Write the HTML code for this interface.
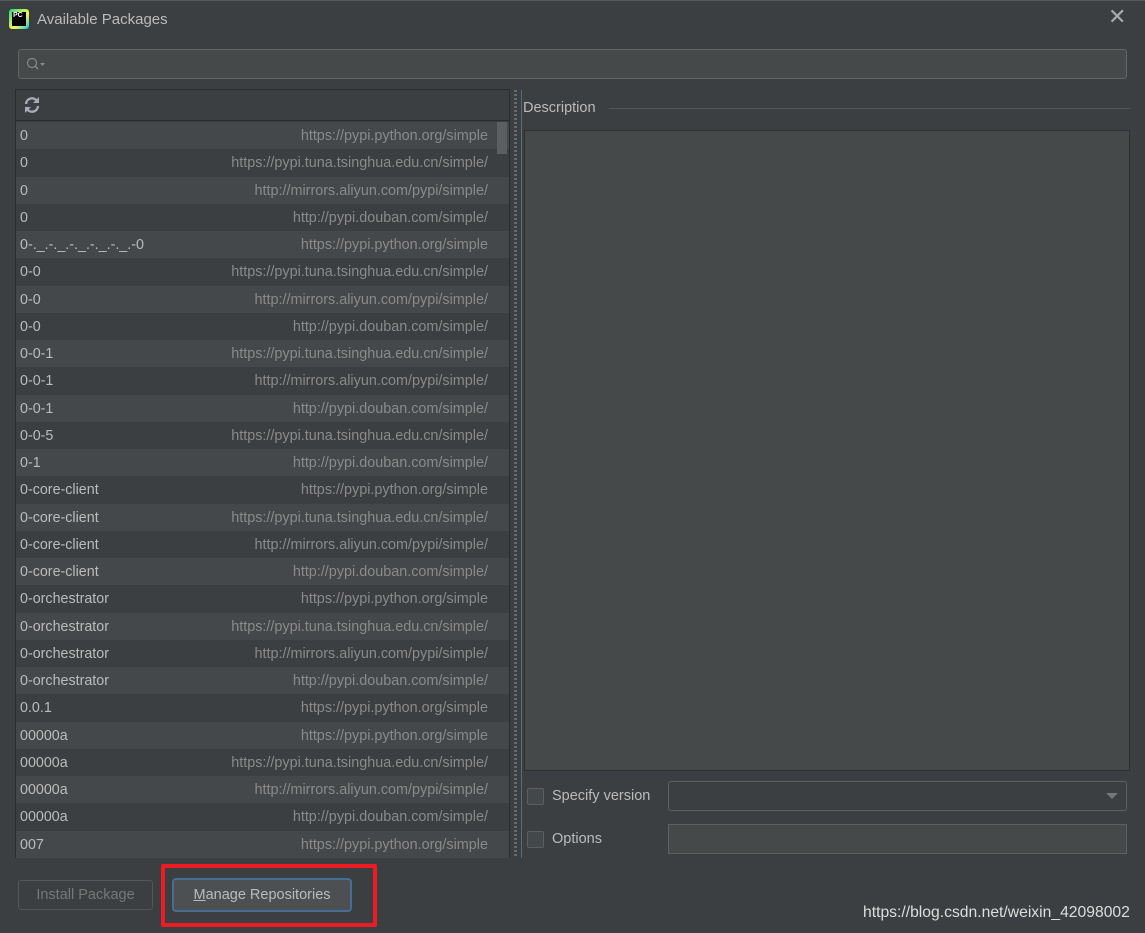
<!DOCTYPE html>
<html><head><style>
*{margin:0;padding:0;box-sizing:border-box}
body{width:1145px;height:933px;background:#3c3f41;font-family:"Liberation Sans",sans-serif;color:#bbbbbb;position:relative;overflow:hidden;font-size:14px}
.abs{position:absolute}
.row{position:absolute;left:16px;width:493px;height:27.25px;line-height:28px}
.row .n{position:absolute;left:4px;color:#bbb;font-size:14.3px}
.row .u{position:absolute;right:21px;color:#8a8a8a;font-size:14.4px}
</style></head><body>
<div class="abs" style="left:0;top:0;width:1145px;height:1px;background:#555"></div>
<div class="abs" style="left:9px;top:9px;width:20px;height:20px;background:linear-gradient(135deg,#21d789,#fcf84a 60%,#07c3f2);border-radius:3px"></div>
<div class="abs" style="left:12px;top:12px;width:14px;height:14px;background:#000;color:#fff;font-size:7px;font-weight:bold;line-height:8px;padding-left:1px">PC</div>
<div class="abs" style="left:37px;top:11px;font-size:15px;color:#bbb">Available Packages</div>
<div class="abs" style="left:1108px;top:4px;font-size:22px;color:#aaa;font-weight:300">✕</div>

<div class="abs" style="left:18px;top:49px;width:1109px;height:30px;border:1px solid #646464;border-radius:3px;background:#45494a"></div>
<svg class="abs" style="left:25px;top:56px" width="22" height="16"><circle cx="7" cy="7" r="4.5" fill="none" stroke="#8a8a8a" stroke-width="1.2"/><line x1="10" y1="10" x2="13" y2="13" stroke="#8a8a8a" stroke-width="1.3"/><path d="M15 7 L20 7 L17.5 10Z" fill="#8a8a8a"/></svg>

<div class="abs" style="left:15px;top:89px;width:495px;height:769px;border:1px solid #2b2b2b;background:#3c3f41"></div>
<div class="abs" style="left:16px;top:120px;width:493px;height:1px;background:#2b2b2b"></div>
<svg class="abs" style="left:23px;top:96px" width="18" height="18" viewBox="0 0 18 18"><path d="M3 8 A6 6 0 0 1 14 5" fill="none" stroke="#aab" stroke-width="2.4"/><path d="M15 10 A6 6 0 0 1 4 13" fill="none" stroke="#aab" stroke-width="2.4"/><path d="M16 1 L16 7 L10 7Z" fill="#aab"/><path d="M2 17 L2 11 L8 11Z" fill="#aab"/></svg>

<div id="list"></div>
<div class="abs" style="left:497px;top:122px;width:10px;height:32px;background:#5c5f61"></div>

<div class="abs" style="left:514px;top:90px;width:3px;height:768px;background-image:repeating-linear-gradient(#6a6a6a 0 2px,transparent 2px 4px)"></div>
<div class="abs" style="left:521px;top:90px;width:1px;height:768px;background:#5a6b7d"></div>

<div class="abs" style="left:523px;top:100px;font-size:14.5px;color:#bbb">Description</div>
<div class="abs" style="left:609px;top:108px;width:521px;height:1px;background:#555"></div>
<div class="abs" style="left:524px;top:130px;width:606px;height:641px;background:#45494a;border:1px solid #2f2f2f"></div>

<div class="abs" style="left:527px;top:788px;width:17px;height:17px;border:1px solid #5e5e5e;border-radius:2px;background:#43494a"></div>
<div class="abs" style="left:552px;top:788px;font-size:14.5px">Specify version</div>
<div class="abs" style="left:668px;top:781px;width:459px;height:30px;border:1px solid #5e6060;border-radius:3px;background:#3c3f41"></div>
<div class="abs" style="left:1106px;top:793px;width:0;height:0;border-left:6px solid transparent;border-right:6px solid transparent;border-top:6px solid #777"></div>
<div class="abs" style="left:527px;top:831px;width:17px;height:17px;border:1px solid #5e5e5e;border-radius:2px;background:#43494a"></div>
<div class="abs" style="left:552px;top:831px;font-size:14.5px">Options</div>
<div class="abs" style="left:668px;top:824px;width:459px;height:30px;border:1px solid #5e6060;background:#45494a"></div>

<div class="abs" style="left:18px;top:880px;width:135px;height:30px;border:1px solid #555;border-radius:3px;color:#777;text-align:center;line-height:28px;font-size:14.5px">Install Package</div>
<div class="abs" style="left:161px;top:864px;width:216px;height:63px;border:4px solid #ed1c24;border-radius:2px"></div>
<div class="abs" style="left:172px;top:878px;width:180px;height:34px;border:2px solid #466d94;border-radius:4px;background:#4c5052;color:#bbb;text-align:center;line-height:30px;font-size:14.5px"><u>M</u>anage Repositories</div>

<div class="abs" style="left:863px;top:904px;font-size:15.7px;color:#ddd">https://blog.csdn.net/weixin_42098002</div>

<script>
var d=[["0","https://pypi.python.org/simple"],["0","https://pypi.tuna.tsinghua.edu.cn/simple/"],["0","http://mirrors.aliyun.com/pypi/simple/"],["0","http://pypi.douban.com/simple/"],["0-._.-._.-._.-._.-._.-0","https://pypi.python.org/simple"],["0-0","https://pypi.tuna.tsinghua.edu.cn/simple/"],["0-0","http://mirrors.aliyun.com/pypi/simple/"],["0-0","http://pypi.douban.com/simple/"],["0-0-1","https://pypi.tuna.tsinghua.edu.cn/simple/"],["0-0-1","http://mirrors.aliyun.com/pypi/simple/"],["0-0-1","http://pypi.douban.com/simple/"],["0-0-5","https://pypi.tuna.tsinghua.edu.cn/simple/"],["0-1","http://pypi.douban.com/simple/"],["0-core-client","https://pypi.python.org/simple"],["0-core-client","https://pypi.tuna.tsinghua.edu.cn/simple/"],["0-core-client","http://mirrors.aliyun.com/pypi/simple/"],["0-core-client","http://pypi.douban.com/simple/"],["0-orchestrator","https://pypi.python.org/simple"],["0-orchestrator","https://pypi.tuna.tsinghua.edu.cn/simple/"],["0-orchestrator","http://mirrors.aliyun.com/pypi/simple/"],["0-orchestrator","http://pypi.douban.com/simple/"],["0.0.1","https://pypi.python.org/simple"],["00000a","https://pypi.python.org/simple"],["00000a","https://pypi.tuna.tsinghua.edu.cn/simple/"],["00000a","http://mirrors.aliyun.com/pypi/simple/"],["00000a","http://pypi.douban.com/simple/"],["007","https://pypi.python.org/simple"]];
var h="";d.forEach(function(r,i){h+='<div class="row" style="top:'+(122+i*27.25)+'px;background:'+(i%2==0?'#45484a':'#3c3f41')+'"><span class="n">'+r[0]+'</span><span class="u">'+r[1]+'</span></div>';});
document.getElementById("list").innerHTML=h;
</script>
</body></html>
